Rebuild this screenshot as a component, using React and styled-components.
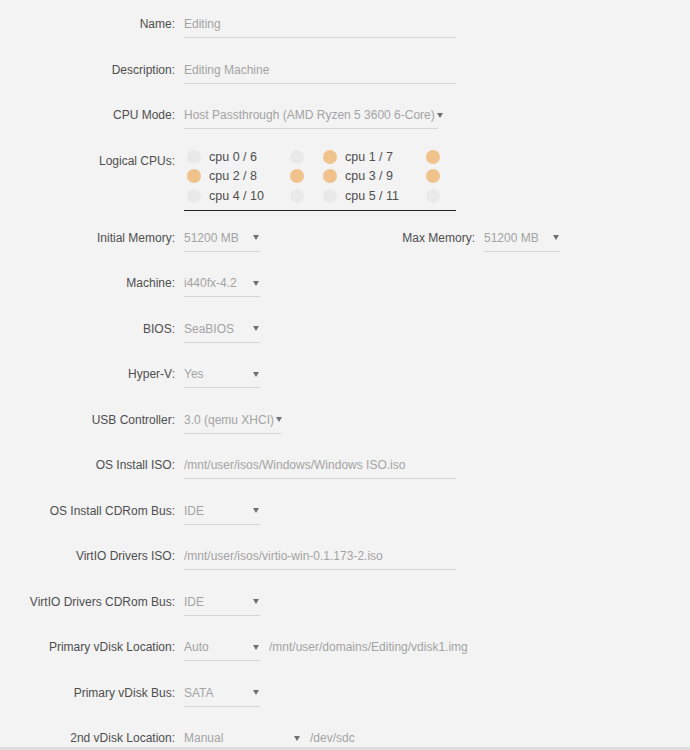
import React from "react";
import styled, { createGlobalStyle } from "styled-components";

const GlobalStyle = createGlobalStyle`
  body {
    margin: 0;
    background: #f3f3f3;
    font-family: "Liberation Sans", Arial, sans-serif;
    font-size: 12px;
  }
`;

const Page = styled.div`
  height: 750px;
  overflow: hidden;
  border-bottom: 3px solid #dedede;
  padding-top: 13px;
  box-sizing: border-box;
`;

const Row = styled.div`
  display: flex;
  align-items: flex-start;
  margin-bottom: ${(props) => props.gap || "20.5px"};
`;

const Label = styled.div`
  width: ${(props) => props.width || "175px"};
  margin-left: ${(props) => props.offset || "0"};
  margin-right: 9px;
  flex-shrink: 0;
  text-align: right;
  color: #4e4e4e;
  line-height: 14px;
  padding-top: 4px;
  white-space: nowrap;
`;

const Field = styled.div`
  width: ${(props) => props.width || "272px"};
  line-height: 14px;
  padding: 4px 0 6px;
  border-bottom: 1px solid #d6d6d6;
  color: #a3a3a3;
  white-space: nowrap;
`;

const SelectBox = styled(Field)`
  display: flex;
  align-items: center;
  padding-right: 1px;
  box-sizing: border-box;
  width: ${(props) => props.width || "76px"};
`;

const SelectText = styled.span`
  flex: ${(props) => (props.fit ? "0 0 auto" : "1")};
`;

const Arrow = styled.span`
  width: 0;
  height: 0;
  margin-left: 2px;
  border-left: 3px solid transparent;
  border-right: 3px solid transparent;
  border-top: 5px solid #707070;
`;

const Note = styled.div`
  color: #a3a3a3;
  line-height: 14px;
  padding-top: 4px;
  margin-left: 9px;
  white-space: nowrap;
`;

const CpuBox = styled.div`
  width: 272px;
  margin-top: -3px;
  padding: 3px 0 7px 3px;
  box-sizing: border-box;
  border-bottom: 1px solid #222;
  display: grid;
  grid-template-columns: 117px 117px;
  column-gap: 19px;
  row-gap: 5.5px;
`;

const CpuPair = styled.div`
  display: flex;
  align-items: center;
  height: 14px;
`;

const Dot = styled.span`
  width: 14px;
  height: 14px;
  border-radius: 50%;
  flex-shrink: 0;
  background: ${(props) => (props.on ? "#f0c28c" : "#e9e9e9")};
`;

const CpuName = styled.span`
  width: 81px;
  padding-left: 8px;
  color: #4e4e4e;
  font-size: 12.5px;
  white-space: nowrap;
`;

const Select = ({ value, width, fit }) => (
  <SelectBox width={width}>
    <SelectText fit={fit}>{value}</SelectText>
    <Arrow />
  </SelectBox>
);

const cpus = [
  ["cpu 0 / 6", false, false],
  ["cpu 1 / 7", true, true],
  ["cpu 2 / 8", true, true],
  ["cpu 3 / 9", true, true],
  ["cpu 4 / 10", false, false],
  ["cpu 5 / 11", false, false],
];

const selects = [
  ["Machine:", "i440fx-4.2"],
  ["BIOS:", "SeaBIOS"],
  ["Hyper-V:", "Yes"],
];

export default function App() {
  return (
    <>
      <GlobalStyle />
      <Page>
        <Row>
          <Label>Name:</Label>
          <Field>Editing</Field>
        </Row>
        <Row>
          <Label>Description:</Label>
          <Field>Editing Machine</Field>
        </Row>
        <Row>
          <Label>CPU Mode:</Label>
          <SelectBox width="254px">
            <SelectText fit>Host Passthrough (AMD Ryzen 5 3600 6-Core)</SelectText>
            <Arrow />
          </SelectBox>
        </Row>
        <Row gap="16px">
          <Label>Logical CPUs:</Label>
          <CpuBox>
            {cpus.map(([name, a, b]) => (
              <CpuPair key={name}>
                <Dot on={a} />
                <CpuName>{name}</CpuName>
                <Dot on={b} />
              </CpuPair>
            ))}
          </CpuBox>
        </Row>
        <Row>
          <Label>Initial Memory:</Label>
          <Select value="51200 MB" />
          <Label offset="40px">Max Memory:</Label>
          <Select value="51200 MB" />
        </Row>
        {selects.map(([label, value]) => (
          <Row key={label}>
            <Label>{label}</Label>
            <Select value={value} />
          </Row>
        ))}
        <Row>
          <Label>USB Controller:</Label>
          <SelectBox width="97px">
            <SelectText fit>3.0 (qemu XHCI)</SelectText>
            <Arrow />
          </SelectBox>
        </Row>
        <Row>
          <Label>OS Install ISO:</Label>
          <Field>/mnt/user/isos/Windows/Windows ISO.iso</Field>
        </Row>
        <Row>
          <Label>OS Install CDRom Bus:</Label>
          <Select value="IDE" />
        </Row>
        <Row>
          <Label>VirtIO Drivers ISO:</Label>
          <Field>/mnt/user/isos/virtio-win-0.1.173-2.iso</Field>
        </Row>
        <Row>
          <Label>VirtIO Drivers CDRom Bus:</Label>
          <Select value="IDE" />
        </Row>
        <Row>
          <Label>Primary vDisk Location:</Label>
          <Select value="Auto" />
          <Note>/mnt/user/domains/Editing/vdisk1.img</Note>
        </Row>
        <Row>
          <Label>Primary vDisk Bus:</Label>
          <Select value="SATA" />
        </Row>
        <Row>
          <Label>2nd vDisk Location:</Label>
          <Select value="Manual" width="117px" />
          <Note>/dev/sdc</Note>
        </Row>
      </Page>
    </>
  );
}
